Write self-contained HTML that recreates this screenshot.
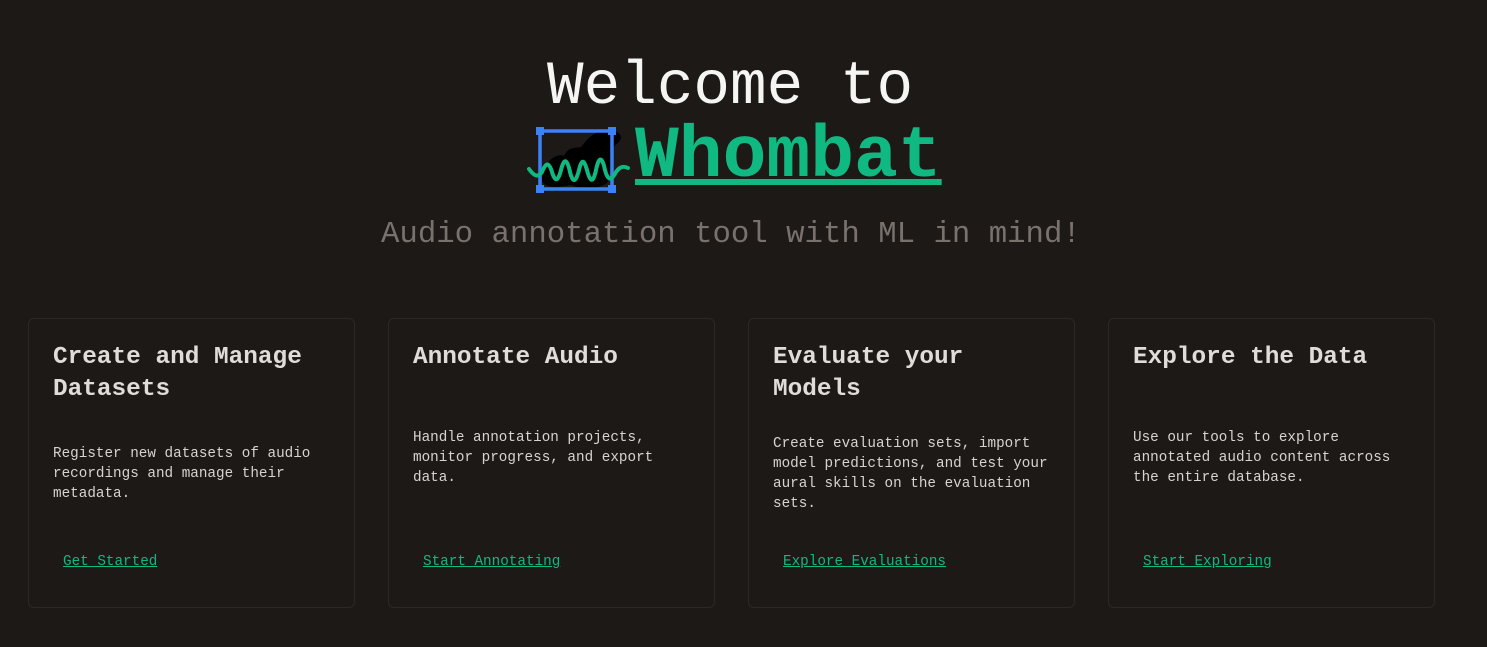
<!DOCTYPE html>
<html><head><style>
body{margin:0;width:1487px;height:647px;background:#1c1917;font-family:"Liberation Mono",monospace;overflow:hidden;position:relative}
.a{position:absolute;white-space:nowrap}
.card{position:absolute;top:318px;width:327px;height:290px;border:1px solid #2c2826;border-radius:6px;box-sizing:border-box}
.card h2{position:absolute;left:24px;top:23px;margin:0;font-size:24.4px;line-height:32px;font-weight:bold;color:#e0dcd9;white-space:pre}
.card p{position:absolute;left:24px;margin:0;font-size:14.3px;line-height:20px;color:#d6d3d1;white-space:pre}
.card a{position:absolute;left:34px;top:235px;font-size:14.3px;color:#10b981;text-decoration:underline}
</style></head><body>
<div class="a" style="left:547px;top:50px;font-size:61px;line-height:76px;color:#f5f5f4">Welcome to</div>
<svg class="a" style="left:526px;top:126px" width="104" height="68" viewBox="0 0 104 68">
<path d="M16 54 C16 40 28 26 38 30 C44 18 52 24 56 20 C64 8 76 2 88 5 C98 8 96 15 89 19 C83 29 87 46 81 57 C70 64 56 63 44 59 C30 62 18 62 16 54Z" fill="#000"/>
<rect x="14" y="5" width="72" height="58" fill="none" stroke="#3b82f6" stroke-width="3.5"/>
<rect x="10" y="1" width="8" height="8" fill="#3b82f6"/><rect x="82" y="1" width="8" height="8" fill="#3b82f6"/>
<rect x="10" y="59" width="8" height="8" fill="#3b82f6"/><rect x="82" y="59" width="8" height="8" fill="#3b82f6"/>
<path d="M3 43 C8 50 12 52 16 46 C20 36 23 36 26 46 C29 56 32 56 35 44 C38 32 41 32 44 46 C47 58 50 56 53 44 C56 32 58 34 61 44 C64 56 67 58 70 44 C73 30 76 30 79 44 C82 56 86 54 90 46 C94 40 98 40 102 42" fill="none" stroke="#10b981" stroke-width="4" stroke-linecap="round"/>
</svg>
<div class="a" style="left:635px;top:115px;font-size:73px;line-height:84px;font-weight:bold;color:#10b981;text-decoration:underline;text-decoration-thickness:6px;text-underline-offset:3px">Whombat</div>
<div class="a" style="left:381px;top:215px;font-size:30.7px;line-height:40px;color:#78716c">Audio annotation tool with ML in mind!</div>

<div class="card" style="left:28px"><h2>Create and Manage
Datasets</h2><p style="top:125px">Register new datasets of audio
recordings and manage their
metadata.</p><a>Get Started</a></div>
<div class="card" style="left:388px"><h2>Annotate Audio</h2><p style="top:109px">Handle annotation projects,
monitor progress, and export
data.</p><a>Start Annotating</a></div>
<div class="card" style="left:748px"><h2>Evaluate your
Models</h2><p style="top:115px">Create evaluation sets, import
model predictions, and test your
aural skills on the evaluation
sets.</p><a>Explore Evaluations</a></div>
<div class="card" style="left:1108px"><h2>Explore the Data</h2><p style="top:109px">Use our tools to explore
annotated audio content across
the entire database.</p><a>Start Exploring</a></div>
</body></html>
